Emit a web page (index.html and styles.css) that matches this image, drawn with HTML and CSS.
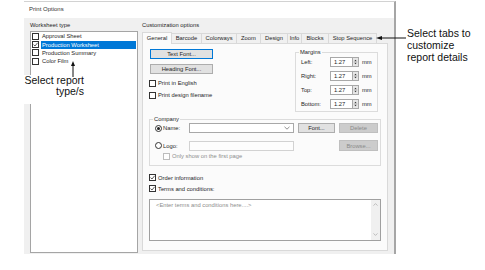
FILE: index.html
```html
<!DOCTYPE html>
<html lang="en">
<head>
<meta charset="utf-8">
<title>Print Options</title>
<link rel="stylesheet" href="styles.css">
</head>
<body>
<div class="stage">
  <div class="dialog">
    <div class="titlebar">Print Options</div>
    <div class="dbody">
      <div class="col-left">
        <div class="caption">Worksheet type</div>
        <div class="listbox">
          <div class="item"><span class="cb"></span><span class="itxt">Approval Sheet</span></div>
          <div class="item sel"><span class="cb"><svg viewBox="0 0 5 5" width="5" height="5"><path d="M0.5 2.6 L2 4 L4.6 0.8" fill="none" stroke="#333" stroke-width="0.8"/></svg></span><span class="itxt">Production Worksheet</span></div>
          <div class="item"><span class="cb"></span><span class="itxt">Production Summary</span></div>
          <div class="item"><span class="cb"></span><span class="itxt">Color Film</span></div>
        </div>
      </div>
      <div class="col-right">
        <div class="caption">Customization options</div>
        <div class="tabs">
          <div class="tab active">General</div>
          <div class="tab">Barcode</div>
          <div class="tab">Colorways</div>
          <div class="tab">Zoom</div>
          <div class="tab">Design</div>
          <div class="tab">Info</div>
          <div class="tab">Blocks</div>
          <div class="tab">Stop Sequence</div>
        </div>
        <div class="panel">
          <div class="toprow">
            <div class="fonts">
              <div class="btn focus">Text Font...</div>
              <div class="btn btn2">Heading Font...</div>
              <div class="check first"><span class="cb"></span><span>Print in English</span></div>
              <div class="check"><span class="cb"></span><span>Print design filename</span></div>
            </div>
            <fieldset class="margins">
              <legend>Margins</legend>
              <div class="mrow"><span class="mlabel">Left:</span><span class="num">1.27</span><span class="spin"><svg viewBox="0 0 6 10" width="6" height="10"><path d="M1.5 4 L3 2.2 L4.5 4 Z M1.5 6 L3 7.8 L4.5 6 Z" fill="#333"/><path d="M0 5 H6" stroke="#bdbdbd" stroke-width="0.6"/></svg></span><span class="unit">mm</span></div>
              <div class="mrow"><span class="mlabel">Right:</span><span class="num">1.27</span><span class="spin"><svg viewBox="0 0 6 10" width="6" height="10"><path d="M1.5 4 L3 2.2 L4.5 4 Z M1.5 6 L3 7.8 L4.5 6 Z" fill="#333"/><path d="M0 5 H6" stroke="#bdbdbd" stroke-width="0.6"/></svg></span><span class="unit">mm</span></div>
              <div class="mrow"><span class="mlabel">Top:</span><span class="num">1.27</span><span class="spin"><svg viewBox="0 0 6 10" width="6" height="10"><path d="M1.5 4 L3 2.2 L4.5 4 Z M1.5 6 L3 7.8 L4.5 6 Z" fill="#333"/><path d="M0 5 H6" stroke="#bdbdbd" stroke-width="0.6"/></svg></span><span class="unit">mm</span></div>
              <div class="mrow"><span class="mlabel">Bottom:</span><span class="num">1.27</span><span class="spin"><svg viewBox="0 0 6 10" width="6" height="10"><path d="M1.5 4 L3 2.2 L4.5 4 Z M1.5 6 L3 7.8 L4.5 6 Z" fill="#333"/><path d="M0 5 H6" stroke="#bdbdbd" stroke-width="0.6"/></svg></span><span class="unit">mm</span></div>
            </fieldset>
          </div>
          <fieldset class="company">
            <legend>Company</legend>
            <div class="crow">
              <span class="radio on"></span><span class="clabel">Name:</span>
              <div class="combo"><svg viewBox="0 0 6 4" width="6" height="4"><path d="M0.5 0.8 L3 3.2 L5.5 0.8" fill="none" stroke="#606060" stroke-width="0.7"/></svg></div>
              <div class="btn fontbtn">Font...</div>
              <div class="btn disabled">Delete</div>
            </div>
            <div class="crow row2">
              <span class="radio"></span><span class="clabel">Logo:</span>
              <div class="logo"></div>
              <div class="btn disabled browse">Browse...</div>
            </div>
            <div class="check onlyfirst"><span class="cb dis"></span><span>Only show on the first page</span></div>
          </fieldset>
          <div class="check order"><span class="cb"><svg viewBox="0 0 5 5" width="5" height="5"><path d="M0.5 2.6 L2 4 L4.6 0.8" fill="none" stroke="#333" stroke-width="0.8"/></svg></span><span>Order information</span></div>
          <div class="check terms-check"><span class="cb"><svg viewBox="0 0 5 5" width="5" height="5"><path d="M0.5 2.6 L2 4 L4.6 0.8" fill="none" stroke="#333" stroke-width="0.8"/></svg></span><span>Terms and conditions:</span></div>
          <div class="terms">
            <div class="placeholder">&lt;Enter terms and conditions here....&gt;</div>
            <div class="vscroll">
              <svg viewBox="0 0 5 3" width="5" height="3"><path d="M0.5 2.6 L2.5 0.6 L4.5 2.6" fill="none" stroke="#a6a6a6" stroke-width="0.7"/></svg>
              <svg viewBox="0 0 5 3" width="5" height="3"><path d="M0.5 0.4 L2.5 2.4 L4.5 0.4" fill="none" stroke="#a6a6a6" stroke-width="0.7"/></svg>
            </div>
          </div>
        </div>
      </div>
    </div>
  </div>

  <div class="note-left">Select report<br>type/s</div>
  <svg class="arrow-up" viewBox="0 0 6 16" width="6" height="16"><path d="M3 3 V16" stroke="#111" stroke-width="1"/><path d="M3 0 L5 5 L1 5 Z" fill="#111"/></svg>

  <svg class="arrow-left" viewBox="0 0 30 6" width="30" height="6"><path d="M3 3 H30" stroke="#111" stroke-width="1"/><path d="M0 3 L6 1 L6 5 Z" fill="#111"/></svg>
  <div class="note-right">Select tabs to<br>customize<br>report details</div>
</div>
</body>
</html>
```

FILE: styles.css
```css
* { box-sizing: border-box; }

html, body {
  margin: 0;
  padding: 0;
  background: #fff;
}

body {
  width: 485px;
  height: 270px;
  overflow: hidden;
  font-family: "Liberation Sans", Arial, sans-serif;
}

.stage {
  position: relative;
  width: 485px;
  height: 270px;
  padding: 1px 0 0 24px;
}

/* dialog */
.dialog {
  width: 372px;
  height: 253px;
  border-top: 1px solid #d2d2d2;
  border-right: 2px solid #a6a6a6;
  font-size: 5.8px;
  color: #1e1e1e;
  display: flex;
  flex-direction: column;
}

.titlebar {
  height: 16px;
  line-height: 15px;
  padding-left: 5px;
  background: #fff;
  color: #333;
  font-size: 6px;
}

.dbody {
  flex: 1;
  background: #f0f0f0;
  display: flex;
  gap: 4px;
  padding: 3px 0 0 6px;
}

.caption {
  height: 8px;
  line-height: 8px;
  white-space: nowrap;
}

/* left list */
.col-left { width: 108px; }

.listbox {
  margin-top: 2px;
  height: 222px;
  background: #fff;
  border: 1px solid #a5a5a5;
}

.item {
  height: 8.4px;
  display: flex;
  align-items: center;
}

.cb {
  flex: none;
  width: 7px;
  height: 7px;
  border: 1px solid #333;
  background: #fff;
  display: flex;
  align-items: center;
  justify-content: center;
}

.cb.dis { border-color: #bdbdbd; }

.item .cb { margin: 0 2px 0 1px; }

.itxt {
  flex: 1;
  height: 8px;
  line-height: 8px;
  padding-left: 1px;
  margin-right: 1px;
  white-space: nowrap;
}

.item.sel .itxt {
  background: #0078d7;
  color: #fff;
}

/* right side */
.col-right { width: 246px; }

.tabs {
  margin-top: 3px;
  height: 11px;
  display: flex;
  align-items: flex-start;
}

.tab {
  height: 10px;
  margin-top: 1px;
  margin-right: -1px;
  border: 1px solid #d9d9d9;
  border-bottom: none;
  background: #f0f0f0;
  text-align: center;
  line-height: 9px;
  white-space: nowrap;
}

.tab:nth-child(1) { width: 30px; }
.tab:nth-child(2) { width: 31px; }
.tab:nth-child(3) { width: 36px; }
.tab:nth-child(4) { width: 25px; }
.tab:nth-child(5) { width: 28px; }
.tab:nth-child(6) { width: 15px; }
.tab:nth-child(7) { width: 28px; }
.tab:nth-child(8) { width: 49px; }

.tab.active {
  height: 12px;
  margin-top: 0;
  line-height: 11px;
  background: #fbfbfb;
  position: relative;
  z-index: 1;
}

.panel {
  height: 208px;
  border: 1px solid #d9d9d9;
  background: #fbfbfb;
  padding: 5px 6px 0 6px;
}

.toprow {
  display: flex;
  justify-content: space-between;
  align-items: flex-start;
}

.btn {
  display: flex;
  align-items: center;
  justify-content: center;
  height: 10px;
  border: 1px solid #adadad;
  background: #e1e1e1;
  white-space: nowrap;
}

.fonts .btn {
  width: 63px;
  margin-left: 1px;
}

.btn.focus { border-color: #0078d7; }
.btn2 { margin-top: 5px; }

.check {
  display: flex;
  align-items: center;
  height: 12px;
  white-space: nowrap;
}

.check .cb { margin-right: 2px; }
.check.first { margin-top: 3px; }

fieldset {
  margin: 0;
  min-width: 0;
  border: 1px solid #dcdcdc;
}

legend {
  padding: 0 1px;
  line-height: 6px;
  font-size: 5.8px;
}

.margins {
  width: 83px;
  margin-right: 3px;
  padding: 0 0 0 3px;
}

.mrow {
  height: 14px;
  display: flex;
  align-items: center;
  padding-left: 2px;
}

.mlabel { width: 29px; }

.num {
  width: 23px;
  height: 10px;
  border: 1px solid #a8a8a8;
  background: #fff;
  padding-left: 3px;
  line-height: 8px;
}

.spin {
  width: 6px;
  height: 10px;
  border: 1px solid #a8a8a8;
  border-left: none;
  background: #e6e6e6;
  display: flex;
  overflow: hidden;
}

.spin svg { margin-top: -1px; }

.unit { margin-left: 3px; }

.company {
  width: 232px;
  margin-top: 4px;
  padding: 1px 2px 5px 5px;
}

.company legend { margin-left: -2px; }

.crow {
  display: flex;
  align-items: center;
  height: 10px;
}

.radio {
  flex: none;
  width: 7px;
  height: 7px;
  border: 1px solid #333;
  border-radius: 50%;
  background: #fff;
  display: flex;
  align-items: center;
  justify-content: center;
}

.radio.on::after {
  content: "";
  width: 3px;
  height: 3px;
  border-radius: 50%;
  background: #222;
}

.clabel {
  width: 26px;
  margin-left: 1px;
}

.combo {
  width: 105px;
  height: 10px;
  border: 1px solid #a8a8a8;
  background: #fff;
  display: flex;
  align-items: center;
  justify-content: flex-end;
  padding-right: 3px;
}

.fontbtn {
  width: 37px;
  margin-left: 4px;
}

.btn.disabled {
  width: 39px;
  margin-left: 4px;
  background: #cccccc;
  border-color: #bfbfbf;
  color: #8a8a8a;
}

.row2 {
  margin-top: 7px;
  height: 11px;
}

.logo {
  width: 105px;
  height: 10px;
  border: 1px solid #d2d2d2;
  background: #fdfdfd;
}

.btn.disabled.browse {
  margin-left: auto;
  height: 11px;
}

.check.onlyfirst {
  margin-top: 1px;
  height: 8px;
  padding-left: 8px;
  color: #8d8d8d;
}

.check.order {
  margin-top: 6px;
  height: 11px;
}

.check.terms-check { height: 11px; }

.terms {
  margin-top: 5px;
  height: 42px;
  border: 1px solid #a0a0a0;
  background: #fff;
  display: flex;
}

.placeholder {
  flex: 1;
  padding: 1px 0 0 6px;
  line-height: 8px;
  color: #8c8c8c;
  white-space: nowrap;
}

.vscroll {
  width: 9px;
  background: #f0f0f0;
  display: flex;
  flex-direction: column;
  justify-content: space-between;
  align-items: center;
  padding: 3px 0 4px;
}

/* annotations */
.note-left {
  position: absolute;
  left: 22px;
  top: 75px;
  width: 62px;
  height: 29px;
  background: #fff;
  text-align: right;
  font-size: 10.5px;
  line-height: 11px;
  color: #111;
  white-space: nowrap;
}

.arrow-up {
  position: absolute;
  left: 70px;
  top: 61px;
}

.arrow-left {
  position: absolute;
  left: 376px;
  top: 35px;
}

.note-right {
  position: absolute;
  left: 407px;
  top: 27px;
  font-size: 10.5px;
  line-height: 12px;
  color: #111;
  white-space: nowrap;
}
```
